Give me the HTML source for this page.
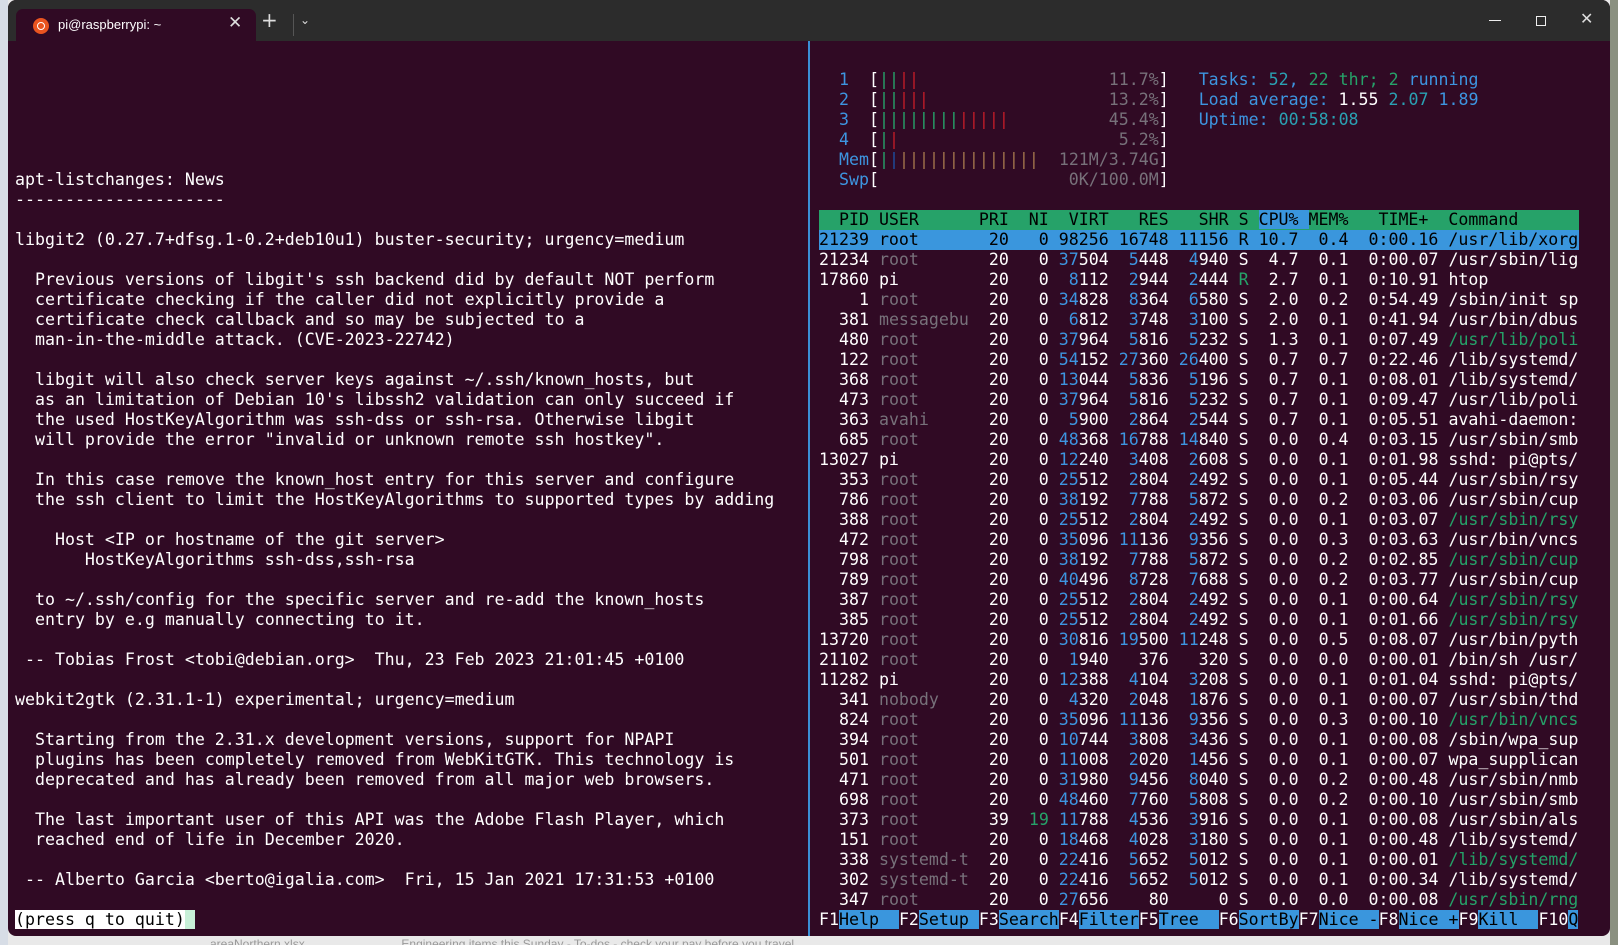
<!DOCTYPE html>
<html><head><meta charset="utf-8"><style>
html,body{margin:0;padding:0;width:1618px;height:945px;overflow:hidden;background:#e9e9e9;position:relative}
.win{position:absolute;left:8px;top:0;width:1602px;height:936px;background:#300a24;border-radius:8px;overflow:hidden}
.bar{position:absolute;left:0;top:0;width:1602px;height:41px;background:#2c2c2c}
.tab{position:absolute;left:8px;top:9px;width:240px;height:32px;background:#300a24;border-radius:7px 7px 0 0}
.logo{position:absolute;left:17px;top:9px;width:16px;height:16px;border-radius:50%;background:#e95420}
.ttl{position:absolute;left:42px;top:8px;font:13px "Liberation Sans",sans-serif;color:#fff}
.ui{position:absolute;color:#ddd;font:18px "DejaVu Sans",sans-serif}
pre{margin:0;position:absolute;font-family:"DejaVu Sans Mono",monospace;font-size:16.6px;line-height:20px;color:#fff;white-space:pre}
i{font-style:normal;color:#77717a}
b{font-weight:normal;color:#3d95e0}
u{text-decoration:none;color:#26a269}
s{text-decoration:none;color:#c01c28}
em{font-style:normal;color:#a2734c}
.db{color:#1c4fa0}
.cy{color:#2aa1b3}
.hd{background:#26a269;color:#000;display:inline-block;width:760px}
.hl{background:#3a96dd;color:#000;display:inline-block;width:760px}
.hb{background:#3a96dd}
.fk{background:#3a96dd;color:#000}
.q{background:#fff;color:#000}
.cur{background:#c8f0d8}
.sep{position:absolute;left:800px;top:41px;width:2px;height:895px;background:#3a8fd6}
</style></head><body>
<div style="position:absolute;left:0;top:0;width:8px;height:945px;background:#d7dde6"></div>
<div style="position:absolute;left:1610px;top:0;width:8px;height:945px;background:#8a9080"></div>
<div style="position:absolute;left:210px;top:937px;font:12px 'Liberation Sans',sans-serif;color:#999">areaNorthern.xlsx &nbsp; &nbsp; &nbsp; &nbsp; &nbsp; &nbsp; &nbsp; &nbsp; &nbsp; &nbsp; &nbsp; &nbsp; &nbsp; &nbsp; Engineering items this Sunday - To-dos - check your pay before you travel</div>
<div class="win">
<div class="bar">
<div class="tab"><div class="logo"><div style="position:absolute;left:4px;top:4px;width:6px;height:6px;border:1.5px solid #fff;border-radius:50%"></div></div><div class="ttl">pi@raspberrypi: ~</div>
<div class="ui" style="left:212px;top:4px;font-size:17px">✕</div></div>
<div class="ui" style="left:253px;top:10px;font-size:20px;line-height:20px">+</div>
<div style="position:absolute;left:285px;top:14px;width:1px;height:22px;background:#555"></div>
<div class="ui" style="left:292px;top:13px;font-size:12px">&#8964;</div>
<div style="position:absolute;left:1481px;top:20px;width:12px;height:1px;background:#eee"></div>
<div style="position:absolute;left:1528px;top:16px;width:8px;height:8px;border:1px solid #eee"></div>
<div class="ui" style="left:1572px;top:9px;font-size:16px">✕</div>
</div>
<div class="sep"></div>
</div>
<pre style="left:15px;top:50px">






apt-listchanges: News
---------------------

libgit2 (0.27.7+dfsg.1-0.2+deb10u1) buster-security; urgency=medium

  Previous versions of libgit's ssh backend did by default NOT perform
  certificate checking if the caller did not explicitly provide a
  certificate check callback and so may be subjected to a
  man-in-the-middle attack. (CVE-2023-22742)

  libgit will also check server keys against ~/.ssh/known_hosts, but
  as an limitation of Debian 10's libssh2 validation can only succeed if
  the used HostKeyAlgorithm was ssh-dss or ssh-rsa. Otherwise libgit
  will provide the error "invalid or unknown remote ssh hostkey".

  In this case remove the known_host entry for this server and configure
  the ssh client to limit the HostKeyAlgorithms to supported types by adding

    Host &lt;IP or hostname of the git server&gt;
       HostKeyAlgorithms ssh-dss,ssh-rsa

  to ~/.ssh/config for the specific server and re-add the known_hosts
  entry by e.g manually connecting to it.

 -- Tobias Frost &lt;tobi@debian.org&gt;  Thu, 23 Feb 2023 21:01:45 +0100

webkit2gtk (2.31.1-1) experimental; urgency=medium

  Starting from the 2.31.x development versions, support for NPAPI
  plugins has been completely removed from WebKitGTK. This technology is
  deprecated and has already been removed from all major web browsers.

  The last important user of this API was the Adobe Flash Player, which
  reached end of life in December 2020.

 -- Alberto Garcia &lt;berto@igalia.com&gt;  Fri, 15 Jan 2021 17:31:53 +0100

<span class="q">(press q to quit)</span><span class="cur"> </span></pre>
<pre style="left:819px;top:50px">

  <b>1</b>  [<u>||</u><s>||</s>                   <i>11.7%</i>]   <b>Tasks:</b> <span class="cy">52</span><b>,</b> <u>22</u> <u>thr;</u> <u>2</u> <b>running</b>
  <b>2</b>  [<u>||</u><s>|||</s>                  <i>13.2%</i>]   <b>Load average:</b> 1.55 <span class="cy">2.07</span> <b>1.89</b>
  <b>3</b>  [<u>||||||||</u><s>|||||</s>          <i>45.4%</i>]   <b>Uptime:</b> <span class="cy">00:58:08</span>
  <b>4</b>  [<u>|</u><s>|</s>                      <i>5.2%</i>]
  <b>Mem</b>[<u>|</u><span class="db">|</span><em>||||||||||||||</em>  <i>121M/3.74G</i>]
  <b>Swp</b>[                   <i>0K/100.0M</i>]

<span class="hd">  PID USER      PRI  NI  VIRT   RES   SHR S <span class="hb">CPU% </span>MEM%   TIME+  Command</span>
<span class="hl">21239 root       20   0 98256 16748 11156 R 10.7  0.4  0:00.16 /usr/lib/xorg</span>
21234 <i>root</i>       20   0 <b>37</b>504  <b>5</b>448  <b>4</b>940 S  4.7  0.1  0:00.07 /usr/sbin/lig
17860 pi         20   0  <b>8</b>112  <b>2</b>944  <b>2</b>444 <u>R</u>  2.7  0.1  0:10.91 htop
    1 <i>root</i>       20   0 <b>34</b>828  <b>8</b>364  <b>6</b>580 S  2.0  0.2  0:54.49 /sbin/init sp
  381 <i>messagebu</i>  20   0  <b>6</b>812  <b>3</b>748  <b>3</b>100 S  2.0  0.1  0:41.94 /usr/bin/dbus
  480 <i>root</i>       20   0 <b>37</b>964  <b>5</b>816  <b>5</b>232 S  1.3  0.1  0:07.49 <u>/usr/lib/poli</u>
  122 <i>root</i>       20   0 <b>54</b>152 <b>27</b>360 <b>26</b>400 S  0.7  0.7  0:22.46 /lib/systemd/
  368 <i>root</i>       20   0 <b>13</b>044  <b>5</b>836  <b>5</b>196 S  0.7  0.1  0:08.01 /lib/systemd/
  473 <i>root</i>       20   0 <b>37</b>964  <b>5</b>816  <b>5</b>232 S  0.7  0.1  0:09.47 /usr/lib/poli
  363 <i>avahi</i>      20   0  <b>5</b>900  <b>2</b>864  <b>2</b>544 S  0.7  0.1  0:05.51 avahi-daemon:
  685 <i>root</i>       20   0 <b>48</b>368 <b>16</b>788 <b>14</b>840 S  0.0  0.4  0:03.15 /usr/sbin/smb
13027 pi         20   0 <b>12</b>240  <b>3</b>408  <b>2</b>608 S  0.0  0.1  0:01.98 sshd: pi@pts/
  353 <i>root</i>       20   0 <b>25</b>512  <b>2</b>804  <b>2</b>492 S  0.0  0.1  0:05.44 /usr/sbin/rsy
  786 <i>root</i>       20   0 <b>38</b>192  <b>7</b>788  <b>5</b>872 S  0.0  0.2  0:03.06 /usr/sbin/cup
  388 <i>root</i>       20   0 <b>25</b>512  <b>2</b>804  <b>2</b>492 S  0.0  0.1  0:03.07 <u>/usr/sbin/rsy</u>
  472 <i>root</i>       20   0 <b>35</b>096 <b>11</b>136  <b>9</b>356 S  0.0  0.3  0:03.63 /usr/bin/vncs
  798 <i>root</i>       20   0 <b>38</b>192  <b>7</b>788  <b>5</b>872 S  0.0  0.2  0:02.85 <u>/usr/sbin/cup</u>
  789 <i>root</i>       20   0 <b>40</b>496  <b>8</b>728  <b>7</b>688 S  0.0  0.2  0:03.77 /usr/sbin/cup
  387 <i>root</i>       20   0 <b>25</b>512  <b>2</b>804  <b>2</b>492 S  0.0  0.1  0:00.64 <u>/usr/sbin/rsy</u>
  385 <i>root</i>       20   0 <b>25</b>512  <b>2</b>804  <b>2</b>492 S  0.0  0.1  0:01.66 <u>/usr/sbin/rsy</u>
13720 <i>root</i>       20   0 <b>30</b>816 <b>19</b>500 <b>11</b>248 S  0.0  0.5  0:08.07 /usr/bin/pyth
21102 <i>root</i>       20   0  <b>1</b>940   376   320 S  0.0  0.0  0:00.01 /bin/sh /usr/
11282 pi         20   0 <b>12</b>388  <b>4</b>104  <b>3</b>208 S  0.0  0.1  0:01.04 sshd: pi@pts/
  341 <i>nobody</i>     20   0  <b>4</b>320  <b>2</b>048  <b>1</b>876 S  0.0  0.1  0:00.07 /usr/sbin/thd
  824 <i>root</i>       20   0 <b>35</b>096 <b>11</b>136  <b>9</b>356 S  0.0  0.3  0:00.10 <u>/usr/bin/vncs</u>
  394 <i>root</i>       20   0 <b>10</b>744  <b>3</b>808  <b>3</b>436 S  0.0  0.1  0:00.08 /sbin/wpa_sup
  501 <i>root</i>       20   0 <b>11</b>008  <b>2</b>020  <b>1</b>456 S  0.0  0.1  0:00.07 wpa_supplican
  471 <i>root</i>       20   0 <b>31</b>980  <b>9</b>456  <b>8</b>040 S  0.0  0.2  0:00.48 /usr/sbin/nmb
  698 <i>root</i>       20   0 <b>48</b>460  <b>7</b>760  <b>5</b>808 S  0.0  0.2  0:00.10 /usr/sbin/smb
  373 <i>root</i>       39  <u>19</u> <b>11</b>788  <b>4</b>536  <b>3</b>916 S  0.0  0.1  0:00.08 /usr/sbin/als
  151 <i>root</i>       20   0 <b>18</b>468  <b>4</b>028  <b>3</b>180 S  0.0  0.1  0:00.48 /lib/systemd/
  338 <i>systemd-t</i>  20   0 <b>22</b>416  <b>5</b>652  <b>5</b>012 S  0.0  0.1  0:00.01 <u>/lib/systemd/</u>
  302 <i>systemd-t</i>  20   0 <b>22</b>416  <b>5</b>652  <b>5</b>012 S  0.0  0.1  0:00.34 /lib/systemd/
  347 <i>root</i>       20   0 <b>27</b>656    80     0 S  0.0  0.0  0:00.08 <u>/usr/sbin/rng</u>
F1<span class="fk">Help  </span>F2<span class="fk">Setup </span>F3<span class="fk">Search</span>F4<span class="fk">Filter</span>F5<span class="fk">Tree  </span>F6<span class="fk">SortBy</span>F7<span class="fk">Nice -</span>F8<span class="fk">Nice +</span>F9<span class="fk">Kill  </span>F10<span class="fk">Q</span></pre>
</body></html>
